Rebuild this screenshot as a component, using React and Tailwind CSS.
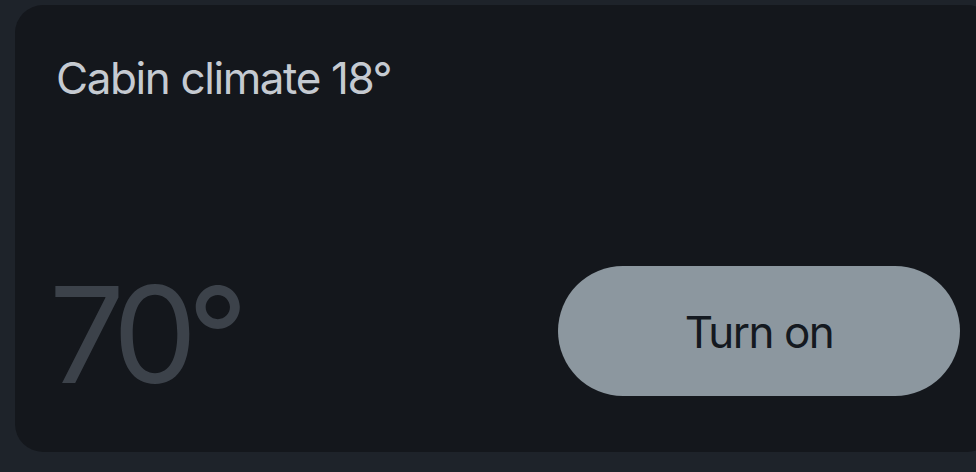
export default function App() {
  return (
    <div className="w-[976px] h-[472px] overflow-hidden bg-[#1e232a] pt-[5px] pl-[15px]" style={{ fontFamily: "Inter, 'Noto Sans', sans-serif" }}>
      <div className="w-[980px] h-[447px] rounded-[28px] bg-[#14171c] flex flex-col justify-between pl-[42px] pr-[35px] pt-[47px] pb-[56px]">
        <div className="text-[44px] leading-[52px] text-[#c5cad1] tracking-[-1.4px] -ml-[1px]">Cabin climate 18°</div>
        <div className="flex items-end justify-between w-[945px]">
          <div className="text-[134px] leading-[120px] text-[#3c424a] tracking-[-10px] -ml-[8px] mb-[2px]">70°</div>
          <button className="w-[402px] h-[130px] rounded-full bg-[#8c979f] text-[#141920] text-[44px] tracking-[-1.5px] mr-[42px] pt-[2px]">Turn on</button>
        </div>
      </div>
    </div>
  );
}
